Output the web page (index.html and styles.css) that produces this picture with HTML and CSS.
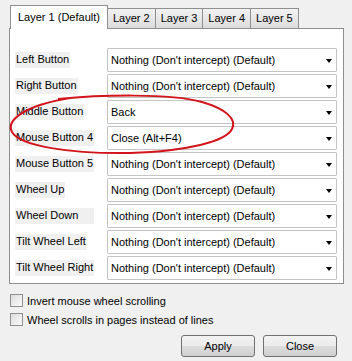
FILE: index.html
```html
<!DOCTYPE html>
<html lang="en">
<head>
    <meta charset="UTF-8">
    <title>Mouse Settings</title>
    <link rel="stylesheet" href="styles.css">
</head>
<body>
    <div class="dialog">
        <div class="tabs">
            <div class="tab active">Layer 1 (Default)</div>
            <div class="tab">Layer 2</div>
            <div class="tab">Layer 3</div>
            <div class="tab">Layer 4</div>
            <div class="tab">Layer 5</div>
        </div>
        <div class="panel">
            <div class="rows">
                <span class="label">Left Button</span>
                <div class="combo">Nothing (Don't intercept) (Default)</div>
                <span class="label">Right Button</span>
                <div class="combo">Nothing (Don't intercept) (Default)</div>
                <span class="label">Middle Button</span>
                <div class="combo">Back</div>
                <span class="label">Mouse Button 4</span>
                <div class="combo">Close (Alt+F4)</div>
                <span class="label">Mouse Button 5</span>
                <div class="combo">Nothing (Don't intercept) (Default)</div>
                <span class="label">Wheel Up</span>
                <div class="combo">Nothing (Don't intercept) (Default)</div>
                <span class="label wide">Wheel Down</span>
                <div class="combo">Nothing (Don't intercept) (Default)</div>
                <span class="label">Tilt Wheel Left</span>
                <div class="combo">Nothing (Don't intercept) (Default)</div>
                <span class="label">Tilt Wheel Right</span>
                <div class="combo">Nothing (Don't intercept) (Default)</div>
            </div>
        </div>
        <div class="options">
            <label class="check"><span class="box"></span>Invert mouse wheel scrolling</label>
            <label class="check"><span class="box"></span>Wheel scrolls in pages instead of lines</label>
        </div>
        <div class="buttons">
            <button class="btn">Apply</button>
            <button class="btn">Close</button>
        </div>
    </div>
    <!-- red hand-drawn marker over the two changed rows -->
    <svg class="marker" width="352" height="361" viewBox="0 0 352 361">
        <path d="M 58 99 C 100 95, 170 93, 202 102 C 226 109, 237 119, 232 129 C 226 141, 190 151, 130 153 C 70 154, 20 146, 12 132 C 6 121, 22 106, 70 98"
              fill="none" stroke="#d3141c" stroke-width="2"/>
    </svg>
</body>
</html>
```
FILE: styles.css
```css
/* General Reset */
* {
    margin: 0;
    padding: 0;
    box-sizing: border-box;
}

body {
    background: #f0f0f0;
    color: #000;
    font-family: 'Liberation Sans', Arial, sans-serif;
    font-size: 11px;
    width: 352px;
    height: 361px;
    overflow: hidden;
    position: relative;
}

.dialog {
    padding: 5px 9px 0 9px;
}

/* Tabs */
.tabs {
    display: flex;
    align-items: flex-end;
    padding-left: 1px;
    height: 23px;
    position: relative;
    z-index: 1;
}

.tab {
    height: 20px;
    padding: 0 5px;
    line-height: 18px;
    white-space: nowrap;
    border: 1px solid #8e8f8f;
    border-bottom: none;
    border-left: none;
    background: linear-gradient(#f2f2f2, #dcdcdc);
}

.tab:nth-child(2) {
    border-left: 1px solid #8e8f8f;
}

.tab.active {
    height: 24px;
    padding: 0 7px;
    line-height: 22px;
    background: #fff;
    border-left: 1px solid #8e8f8f;
    margin-bottom: -1px;
}

.tab.active + .tab {
    border-left: none;
}

.panel {
    background: #fff;
    border: 1px solid #8e8f8f;
    width: 335px;
    height: 256px;
    padding: 19px 5px 0 5px;
}

.rows {
    display: grid;
    grid-template-columns: 92px 230px;
    grid-auto-rows: 24px;
    row-gap: 2px;
    align-items: center;
}

.label {
    justify-self: start;
    background: #f0f0f0;
    padding: 1px 1px 2px 1px;
    line-height: 13px;
}

.label.wide {
    width: 79px;
}

.combo {
    height: 24px;
    border: 1px solid #c5c5c5;
    border-radius: 1px;
    line-height: 22px;
    padding-left: 3px;
    position: relative;
    background: #fff;
}

.combo::after {
    content: "";
    position: absolute;
    right: 4px;
    top: 10px;
    border-left: 3.5px solid transparent;
    border-right: 3.5px solid transparent;
    border-top: 4px solid #000;
}

/* Checkboxes */
.options {
    padding: 10px 0 0 1px;
    display: flex;
    flex-direction: column;
    gap: 6px;
}

.check {
    display: flex;
    align-items: center;
    gap: 4px;
    height: 13px;
}

.box {
    width: 13px;
    height: 13px;
    border: 1px solid #8f8f8f;
    background: linear-gradient(135deg, #dcdcdc, #fbfbfb);
}

/* Buttons */
.buttons {
    display: flex;
    justify-content: flex-end;
    gap: 8px;
    padding: 9px 6px 0 0;
}

.btn {
    width: 74px;
    height: 22px;
    border: 1px solid #707070;
    border-radius: 3px;
    background: linear-gradient(#f2f2f2 0%, #ebebeb 50%, #dddddd 51%, #cfcfcf 100%);
    font-family: 'Liberation Sans', Arial, sans-serif;
    font-size: 11px;
    color: #000;
}

.marker {
    position: absolute;
    left: 0;
    top: 0;
    pointer-events: none;
}
```
